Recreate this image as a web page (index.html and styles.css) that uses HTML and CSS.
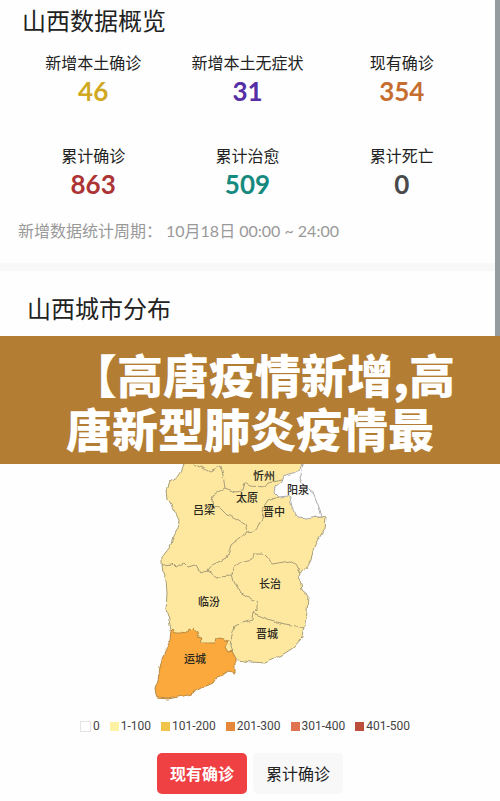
FILE: index.html
```html
<!DOCTYPE html>
<html lang="zh-CN">
<head>
<meta charset="utf-8">
<meta name="viewport" content="width=device-width, initial-scale=1">
<title>山西数据概览</title>
<link rel="stylesheet" href="styles.css">
</head>
<body>
<div class="top">
  <section class="overview">
    <h2>山西数据概览</h2>
    <dl class="stats">
      <div><dt>新增本土确诊</dt><dd class="gold">46</dd></div>
      <div><dt>新增本土无症状</dt><dd class="purple">31</dd></div>
      <div><dt>现有确诊</dt><dd class="orange">354</dd></div>
      <div><dt>累计确诊</dt><dd class="red">863</dd></div>
      <div><dt>累计治愈</dt><dd class="teal">509</dd></div>
      <div><dt>累计死亡</dt><dd class="dark">0</dd></div>
    </dl>
    <p class="period"><span>新增数据统计周期：</span><span>10月18日 00:00 ~ 24:00</span></p>
  </section>
  <section class="cities">
    <h2>山西城市分布</h2>
  </section>
</div>
<h1 class="banner">【高唐疫情新增,高<br>唐新型肺炎疫情最</h1>
<main class="distribution">
  <svg class="map" viewBox="145 464 210 238" role="img" aria-label="山西城市分布">
    <defs>
      <filter id="rough" x="-5%" y="-5%" width="110%" height="110%">
        <feTurbulence type="fractalNoise" baseFrequency="0.14" numOctaves="1" seed="4" result="n"/>
        <feDisplacementMap in="SourceGraphic" in2="n" scale="5" xChannelSelector="R" yChannelSelector="G"/>
      </filter>
    </defs>
    <g class="regions" filter="url(#rough)">
      <path class="low" d="M184 456V464L183 468 177 477 170 482 167 490 168 500 175 512 179 520 178 528 173 538 170 547 162 557 162 565 163 572 166 580 167 593 166 610 169 620 171 630 200 650 232 652 237 660 250 662 265 663 282 655 293 648 302 638 304 627 307 613 308 595 302 590 301 584 298 577 300 573 307 568 311 560 313 550 318 540 325 528 326 518 322 517 300 518 292 500 284 485 300 470 303 464V456Z"/>
      <path class="none" d="M304 456L303 464 300 470 293 473 283 476 281 482 275 487 274 493 278 497 287 496 290 498 292 507 298 518 307 519 315 517 322 517 320 510 317 502 313 492 303 485 300 478 302 470 304 464Z"/>
      <path class="high" d="M171 630L173 628 175 632 181 632 187 633 188 630 191 631 194 628 197 632 198 636 203 637 201 643 215 643 216 639 220 638 228 641 225 647 228 652 232 651 235 657 235 673 228 671 223 674 217 677 213 683 202 688 195 692 188 695 178 697 168 699 157 698 156 695 155 688 158 680 160 667 165 650 170 640Z"/>
      <path class="border" d="M162 565L172 564 175 567 184 563 188 567 195 565 198 570 202 573 207 571 212 565 227 558 231 545 240 538 247 532"/>
      <path class="border" d="M193 464L200 467 210 472 221 467 223 475 225 488 213 495 212 502 213 507 220 508 227 515 237 520 245 525 247 532 255 531 258 527 262 518 264 507 268 501 278 497"/>
      <path class="border" d="M225 488L235 492 242 491 244 482 250 486 265 487 268 483 281 480"/>
      <path class="border" d="M207 571L217 577 232 576 233 567 240 562 252 559 253 553 263 553 267 557 272 564 290 561 295 564 300 573"/>
      <path class="border" d="M232 576L235 583 240 592 250 598 257 603 257 610 254 613 258 615 268 619 280 623 292 625 304 628"/>
      <path class="border" d="M254 613L253 620 242 623 235 626 232 635 231 640 230 647 232 652"/>
    </g>
    <g class="names">
      <text x="264" y="480">忻州</text>
      <text x="298" y="494">阳泉</text>
      <text x="247" y="502">太原</text>
      <text x="204" y="514">吕梁</text>
      <text x="274" y="516">晋中</text>
      <text x="270" y="588">长治</text>
      <text x="209" y="606">临汾</text>
      <text x="267" y="638">晋城</text>
      <text x="195" y="663">运城</text>
    </g>
  </svg>
  <ul class="legend">
    <li class="l0">0</li>
    <li class="l1">1-100</li>
    <li class="l2">101-200</li>
    <li class="l3">201-300</li>
    <li class="l4">301-400</li>
    <li class="l5">401-500</li>
  </ul>
  <div class="tabs">
    <button type="button" class="active">现有确诊</button>
    <button type="button">累计确诊</button>
  </div>
</main>
</body>
</html>
```
FILE: styles.css
```css
* { box-sizing: border-box; }
body {
  margin: 0;
  background: #fefefe;
  color: #222;
  font-family: Lato, "Noto Sans CJK SC", sans-serif;
}
h1, h2, dl, dd, p, ul { margin: 0; padding: 0; }
.top { border-right: 5px solid #959c9f; }
.overview {
  padding: 4px 16px 20px;
  border-bottom: 8px solid #f8f8f8;
}
h2 {
  font-size: 24px;
  line-height: 34px;
  font-weight: 400;
}
.overview h2 { padding-left: 6px; }
.stats {
  display: grid;
  grid-template-columns: repeat(3, 1fr);
  row-gap: 36px;
  padding-top: 12px;
  text-align: center;
}
.stats dt {
  font-size: 16px;
  line-height: 26px;
}
.stats dd {
  font-size: 26px;
  line-height: 31px;
  font-weight: 700;
}
.gold { color: #d0a822; }
.purple { color: #552da5; }
.orange { color: #c66e31; }
.red { color: #ad3434; }
.teal { color: #178a80; }
.dark { color: #4a4a4c; }
.period {
  display: flex;
  gap: 4px;
  padding: 19px 0 0 2px;
  font-size: 16px;
  line-height: 24px;
  color: #999;
  white-space: nowrap;
}
.cities { padding: 21px 27px 10px; }
.banner {
  padding: 10px 0;
  background: #b37d34;
  color: #fff;
  font-family: "Noto Sans CJK SC", sans-serif;
  font-size: 46px;
  line-height: 54px;
  font-weight: 900;
  text-align: center;
  text-indent: 26px;
}
.distribution {
  display: flex;
  flex-direction: column;
  align-items: center;
}
.map {
  display: block;
  width: 42%;
}
.regions path {
  stroke: #a79e78;
  stroke-width: 1;
  stroke-linejoin: round;
}
.regions .low { fill: #fee89f; }
.regions .none { fill: #fefefe; stroke: #aaa; }
.regions .high { fill: #fba83c; stroke: #b78a43; }
.regions .border { fill: none; }
.names {
  fill: #2b281d;
  font-family: "Noto Sans CJK SC", sans-serif;
  font-size: 11px;
  font-weight: 500;
  text-anchor: middle;
}
.legend {
  display: flex;
  gap: 10px;
  padding: 16px 10px 0 0;
  list-style: none;
  font-family: Roboto, sans-serif;
  font-size: 12px;
  line-height: 16px;
  color: #444;
}
.legend li {
  display: flex;
  align-items: center;
  gap: 2px;
}
.legend li::before {
  content: "";
  width: 9px;
  height: 9px;
  background: #fff;
}
.legend .l0::before { border: 1px solid #e4e4e4; }
.legend .l1::before { background: #fef3a5; }
.legend .l2::before { background: #f0c34b; }
.legend .l3::before { background: #e5883a; }
.legend .l4::before { background: #e07450; }
.legend .l5::before { background: #bc4e3c; }
.tabs {
  display: flex;
  gap: 6px;
  padding: 19px 0 6px;
}
.tabs button {
  padding: 8px 13px;
  border: 0;
  border-radius: 5px;
  background: #f8f8f8;
  color: #222;
  font-family: "Noto Sans CJK SC", sans-serif;
  font-size: 16px;
  line-height: 25px;
}
.tabs .active {
  background: #ef4044;
  color: #fff;
  font-weight: 700;
}
```
